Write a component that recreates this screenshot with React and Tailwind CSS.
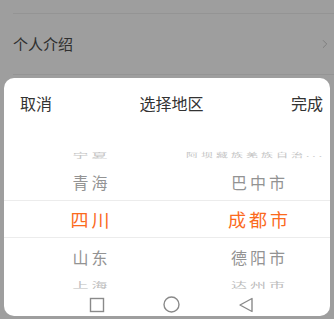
import { ChevronRight } from 'lucide-react';

const font = { fontFamily: '"Noto Sans CJK SC", "Noto Sans", sans-serif' };

const App = () => {
  return (
    <div className="w-[334px] h-[319px] bg-[#9e9e9e] overflow-hidden" style={font}>
      {/* dimmed page behind the sheet */}
      <div className="h-[13px]" />
      <div className="ml-[13px] border-t border-[#949494]" />
      <div className="h-[60px] flex items-center justify-between pl-[13px] pr-[2px]">
        <span className="text-[15px] text-[#2f2f2f]">个人介绍</span>
        <ChevronRight size={14} strokeWidth={1.6} className="text-[#7c7c7c]" />
      </div>
      <div className="ml-[13px] border-t border-[#949494]" />
      <div className="h-[3px]" />

      {/* bottom sheet */}
      <div className="ml-[4px] w-[326px] h-[238px] bg-white rounded-[10px] flex flex-col overflow-hidden">
        <div className="h-[50px] flex items-center justify-between pl-4 pr-[7px] text-[16px] text-[#333]">
          <span>取消</span>
          <span>选择地区</span>
          <span>完成</span>
        </div>

        <div className="h-[165px] overflow-hidden flex flex-col">
          <div className="h-[42px] pt-[14px] flex items-center">
            <div className="w-[165px] pl-[10px] text-center text-[16px] tracking-[3px] text-[#c4c4c4] scale-y-[0.45]">宁夏</div>
            <div className="flex-1 pl-[12px] text-center text-[12px] tracking-[3px] text-[#c4c4c4] scale-y-[0.45] whitespace-nowrap">阿坝藏族羌族自治...</div>
          </div>
          <div className="h-[32px] pb-[5px] flex items-center">
            <div className="w-[165px] pl-[10px] text-center text-[16px] tracking-[3px] text-[#939393]">青海</div>
            <div className="flex-1 pl-[20px] text-center text-[16px] tracking-[3px] text-[#939393]">巴中市</div>
          </div>
          <div className="h-[40px] border-y border-[#ececec] flex items-center">
            <div className="w-[165px] pl-[10px] text-center text-[18px] tracking-[3px] text-[#fb6a1d]">四川</div>
            <div className="flex-1 pl-[20px] text-center text-[18px] tracking-[3px] text-[#fb6a1d]">成都市</div>
          </div>
          <div className="h-[38px] flex items-center">
            <div className="w-[165px] pl-[10px] text-center text-[16px] tracking-[3px] text-[#939393]">山东</div>
            <div className="flex-1 pl-[20px] text-center text-[16px] tracking-[3px] text-[#939393]">德阳市</div>
          </div>
          <div className="h-[18px] shrink-0 flex items-center">
            <div className="w-[165px] pl-[10px] text-center text-[16px] tracking-[3px] text-[#bdbdbd] scale-y-[0.5]">上海</div>
            <div className="flex-1 pl-[20px] text-center text-[16px] tracking-[3px] text-[#bdbdbd] scale-y-[0.5]">达州市</div>
          </div>
        </div>

        {/* system nav bar */}
        <div className="h-[23px] flex items-center gap-[58px] pl-[85px]">
          <svg width="16" height="16" viewBox="0 0 16 16" fill="none" stroke="#8a8a8a" strokeWidth="1.4">
            <rect x="1.5" y="1.5" width="13" height="13" />
          </svg>
          <svg width="17" height="17" viewBox="0 0 17 17" fill="none" stroke="#8a8a8a" strokeWidth="1.4">
            <circle cx="8.5" cy="8.5" r="7.5" />
          </svg>
          <svg width="16" height="16" viewBox="0 0 16 16" fill="none" stroke="#8a8a8a" strokeWidth="1.4" strokeLinejoin="round">
            <path d="M14 1.5 L2 8 L14 14.5 Z" />
          </svg>
        </div>
      </div>
    </div>
  );
};

export default App;
